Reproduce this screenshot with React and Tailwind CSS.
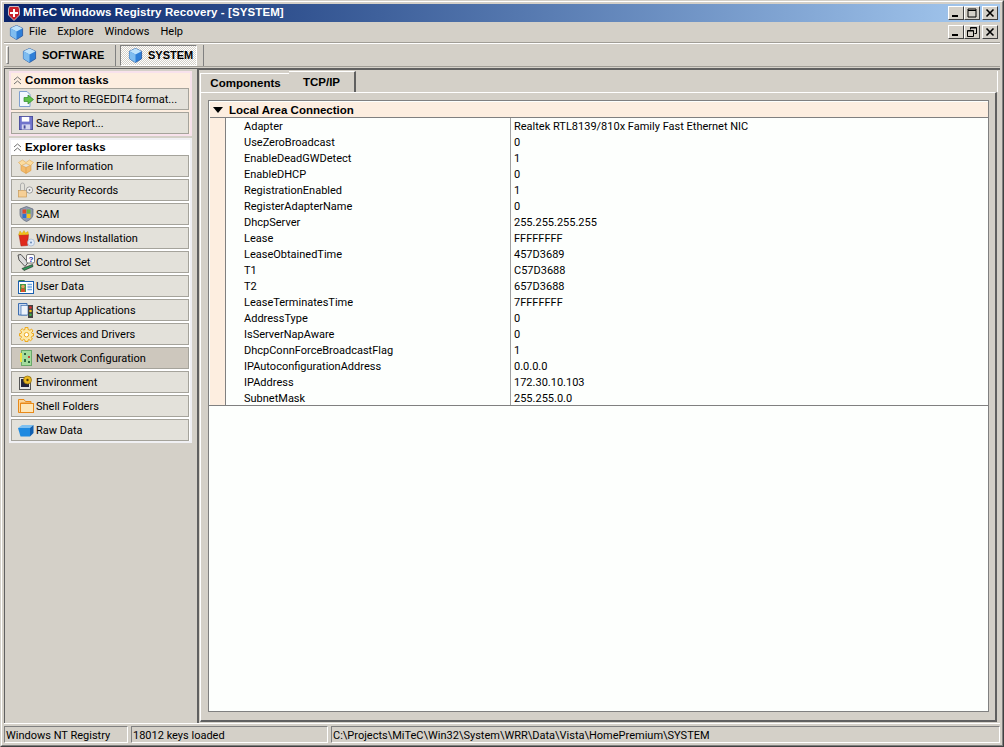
import React from "react";

const Cube = ({ s = 15 }) => (
  <svg width={s} height={s} viewBox="0 0 16 16" className="shrink-0">
    <path d="M8 0.5 L14.5 3.5 V11.5 L8 15.5 L1.5 11.5 V3.5 Z" fill="#2f7fd8" stroke="#1c4f9c" strokeWidth="0.8" />
    <path d="M8 0.5 L14.5 3.5 L8 7 L1.5 3.5 Z" fill="#bfe3fb" />
    <path d="M1.5 3.5 L8 7 V15.5 L1.5 11.5 Z" fill="#7fbdf0" />
  </svg>
);

const ExportIcon = () => (
  <svg width="16" height="16" viewBox="0 0 16 16">
    <path d="M1.5 0.5 H9 L12 3.5 V15.5 H1.5 Z" fill="#f4f8ff" stroke="#7f9fd0" />
    <path d="M6 6.5 H10 V4 L15.5 8.5 L10 13 V10.5 H6 Z" fill="#5fc24a" stroke="#2f8a2a" strokeWidth="0.7" />
  </svg>
);
const SaveIcon = () => (
  <svg width="14" height="14" viewBox="0 0 15 15">
    <rect x="0.5" y="0.5" width="14" height="14" fill="#7074cc" stroke="#4a4e9c" />
    <rect x="3" y="1" width="8" height="5" fill="#fff" />
    <rect x="3" y="9" width="9" height="5.5" fill="#d4d6ee" />
    <rect x="5" y="10" width="2" height="3.5" fill="#4a4e9c" />
  </svg>
);
const BoxIcon = () => (
  <svg width="16" height="15" viewBox="0 0 16 15">
    <path d="M3 6 L8 8.5 L13 6 V11.5 L8 14.5 L3 11.5 Z" fill="#f3bb6c" stroke="#dc9c44" strokeWidth="0.6" />
    <path d="M0.5 3.5 L4.5 1 L8 3.5 L11.5 1 L15.5 3.5 L12.5 6.5 L8 4.5 L3.5 6.5 Z" fill="#fbdca0" stroke="#e0a850" strokeWidth="0.6" />
    <path d="M8 8.5 V14.5" stroke="#dc9c44" strokeWidth="0.7" />
  </svg>
);
const KeysIcon = () => (
  <svg width="16" height="16" viewBox="0 0 16 16">
    <rect x="0.5" y="8.5" width="8" height="6.5" fill="#f6cf96" stroke="#c89a58" strokeWidth="0.7" />
    <path d="M2.5 8.5 V3 A2 2 0 0 1 6.5 3 V8.5" fill="none" stroke="#a8a8a8" strokeWidth="0.9" />
    <circle cx="11.5" cy="8" r="3.2" fill="#f0f0f0" stroke="#8c8c8c" strokeWidth="0.8" />
    <circle cx="11.5" cy="8" r="0.9" fill="#8c8c8c" />
  </svg>
);
const ShieldIcon = () => (
  <svg width="15" height="16" viewBox="0 0 15 16">
    <path d="M7.5 0.5 L14 3 V8 C14 12 10 14.5 7.5 15.5 C5 14.5 1 12 1 8 V3 Z" fill="#8f9ab0" stroke="#5b6476" strokeWidth="0.7" />
    <rect x="3.5" y="3.5" width="3.7" height="4" fill="#e0492a" />
    <rect x="7.8" y="3.5" width="3.7" height="4" fill="#6cb33f" />
    <rect x="3.5" y="8" width="3.7" height="4" fill="#2f6fd0" />
    <rect x="7.8" y="8" width="3.7" height="4" fill="#f5c218" />
  </svg>
);
const InstallIcon = () => (
  <svg width="17" height="17" viewBox="0 0 17 17">
    <path d="M1 5 L10.5 4.5 L9.5 15.5 L3 16 Z" fill="#e02a1c" stroke="#a81c12" strokeWidth="0.5" />
    <path d="M0.5 5 L2 1 L4 3.5 L6 0.5 L7.5 3 L10 1.5 L10.5 4.5 Z" fill="#f5c218" stroke="#c89a10" strokeWidth="0.4" />
    <circle cx="13" cy="12.5" r="3.5" fill="#dfe9f6" stroke="#93a9c8" strokeWidth="0.6" />
    <circle cx="13" cy="12.5" r="0.9" fill="#5f7fb0" />
  </svg>
);
const ControlIcon = () => (
  <svg width="18" height="17" viewBox="0 0 18 17">
    <path d="M1 1 L4 0.5 L11 8.5 L8 12.5 L2 6 Z" fill="#dcdcdc" stroke="#333" strokeWidth="0.8" />
    <rect x="9.5" y="0.5" width="8" height="8.5" rx="1.5" fill="#fff" stroke="#444" strokeWidth="0.7" />
    <text x="11.5" y="7.5" fontSize="8" fontWeight="700" fill="#1c2fb0" fontFamily="Liberation Sans, sans-serif">?</text>
    <path d="M5 14.5 L15.5 10.5 L16 12.5 L7 16.5 Z" fill="#2f9a5a" stroke="#1c1c1c" strokeWidth="0.6" />
  </svg>
);
const UserIcon = () => (
  <svg width="16" height="15" viewBox="0 0 16 15">
    <path d="M0.5 2.5 H6 L7 1 H0.5 Z" fill="#2f7a4a" />
    <rect x="0.5" y="2.5" width="15" height="12" fill="#fff" stroke="#1c5fae" />
    <rect x="2" y="5" width="6" height="8" fill="#3f9a4a" />
    <circle cx="5" cy="7.5" r="1.8" fill="#e8a060" />
    <rect x="3" y="9.5" width="4" height="3.5" fill="#d9502a" />
    <path d="M9.5 5.5 H14 M9.5 8 H14 M9.5 10.5 H14" stroke="#6fa8e0" strokeWidth="1.4" />
  </svg>
);
const StartupIcon = () => (
  <svg width="16" height="16" viewBox="0 0 16 16">
    <path d="M0.5 1.5 H9 V13 H0.5 Z" fill="#c8d8f0" stroke="#3f6fb0" />
    <rect x="3" y="3.5" width="7" height="9.5" fill="#eef3fb" stroke="#3f6fb0" strokeWidth="0.7" />
    <rect x="10" y="3" width="5" height="13" fill="#444" />
    <circle cx="12.5" cy="5.5" r="1.3" fill="#e0302a" />
    <circle cx="12.5" cy="9" r="1.3" fill="#f5c218" />
    <circle cx="12.5" cy="12.8" r="1.3" fill="#3fb04a" />
  </svg>
);
const GearIcon = () => (
  <svg width="15" height="15" viewBox="0 0 15 15">
    <path d="M6 0.5 H9 V2.5 L11 3.3 L12.5 2 L14 4 L12.5 5.3 L13 6.5 H14.5 V9 H13 L12.3 10.7 L13.5 12 L11.5 13.7 L10 12.5 L9 13 V14.5 H6 V13 L4.5 12.3 L3 13.7 L1.2 11.8 L2.5 10.3 L2 9 H0.5 V6.5 H2 L2.6 5 L1.3 3.5 L3.2 1.7 L4.7 3 L6 2.5 Z" fill="#fde9a8" stroke="#eda91e" />
    <circle cx="7.5" cy="7.7" r="2.2" fill="#fff" stroke="#eda91e" />
  </svg>
);
const NetIcon = () => (
  <svg width="12" height="16" viewBox="0 0 12 16">
    <rect x="1.5" y="0.5" width="10" height="15" fill="#a4dc9c" stroke="#6aa86a" />
    <rect x="0" y="3" width="2" height="9" fill="#f0e040" />
    <rect x="4" y="3" width="2" height="2" fill="#2f6a3f" />
    <rect x="8" y="6" width="2" height="2" fill="#c04a3a" />
    <rect x="4" y="9" width="2" height="3" fill="#2f6a3f" />
    <rect x="8" y="11" width="2" height="2" fill="#2f6a3f" />
  </svg>
);
const EnvIcon = () => (
  <svg width="15" height="15" viewBox="0 0 15 15">
    <rect x="0.5" y="2.5" width="11" height="12" fill="#e4e4e4" stroke="#555" />
    <rect x="2" y="4" width="8" height="8" fill="#23233a" />
    <circle cx="8.5" cy="5" r="4" fill="#eab820" stroke="#8a6a10" strokeWidth="0.7" />
    <circle cx="8.5" cy="5" r="1.2" fill="#5a4208" />
  </svg>
);
const FolderIcon = () => (
  <svg width="16" height="14" viewBox="0 0 16 14">
    <path d="M0.5 0.5 H6 L7.5 2.5 H13 V4 H2.5 V13.5 H0.5 Z" fill="#fcd69a" stroke="#e88a1a" />
    <rect x="2.5" y="4.5" width="13" height="9" fill="#fde6b8" stroke="#e88a1a" />
  </svg>
);
const RawIcon = () => (
  <svg width="16" height="13" viewBox="0 0 16 13">
    <path d="M0 4 L4 1 H15.5 L12 4 Z" fill="#7ec0f0" />
    <path d="M0 4 H12 V12.5 H2.5 Z" fill="#1f8ae0" />
    <path d="M12 4 L15.5 1 V9 L12 12.5 Z" fill="#0f5fb0" />
  </svg>
);
const ShieldLogo = () => (
  <svg width="12" height="15" viewBox="0 0 12 15" className="shrink-0">
    <path d="M1.5 0.5 H10.5 L11.5 3 V9 L6 14.5 L0.5 9 V3 Z" fill="#c8202a" stroke="#ddd" strokeWidth="0.8" />
    <path d="M5 3 H7 V6 H10 V8 H7 V11 H5 V8 H2 V6 H5 Z" fill="#fff" />
  </svg>
);

const Chevrons = () => (
  <svg width="9" height="9" viewBox="0 0 9 9" className="shrink-0">
    <path d="M1 4 L4.5 1 L8 4 M1 8 L4.5 5 L8 8" fill="none" stroke="#6f6f6f" strokeWidth="1" />
  </svg>
);

const WinBtn = ({ kind, gap }) => (
  <div className={`w-4 h-[14px] bg-[#d4d0c8] border border-t-white border-l-white border-r-[#404040] border-b-[#404040] flex items-center justify-center ${gap ? "ml-0.5" : ""}`}>
    <svg width="10" height="10" viewBox="0 0 10 10">
      {kind === "min" && <rect x="1" y="7" width="6" height="2" fill="#000" />}
      {kind === "max" && <path d="M1 2.5 H9 V9 H1 Z M1 1 H9 V2.5 H1 Z" fill="none" stroke="#000" />}
      {kind === "close" && <path d="M1.5 1.5 L8.5 8.5 M8.5 1.5 L1.5 8.5" stroke="#000" strokeWidth="1.6" />}
      {kind === "restore" && <path d="M3.5 2.5 V0.5 H9.5 V6.5 H7.5 M0.5 3.5 H6.5 V9.5 H0.5 Z M0.5 4 H6.5 M3.5 1 H9.5" fill="none" stroke="#000" />}
    </svg>
  </div>
);

const TaskButton = ({ icon, label, active }) => (
  <div className={`h-[22px] mr-px flex items-center border border-[#a5a39b] ${active ? "bg-[#cdc7bd]" : "bg-[#e3e1da]"}`}>
    <div className="w-6 h-4 shrink-0 flex items-center justify-center pl-1">{icon}</div>
    <span className="whitespace-nowrap pt-0.5">{label}</span>
  </div>
);

const rows = [
  ["Adapter", "Realtek RTL8139/810x Family Fast Ethernet NIC"],
  ["UseZeroBroadcast", "0"],
  ["EnableDeadGWDetect", "1"],
  ["EnableDHCP", "0"],
  ["RegistrationEnabled", "1"],
  ["RegisterAdapterName", "0"],
  ["DhcpServer", "255.255.255.255"],
  ["Lease", "FFFFFFFF"],
  ["LeaseObtainedTime", "457D3689"],
  ["T1", "C57D3688"],
  ["T2", "657D3688"],
  ["LeaseTerminatesTime", "7FFFFFFF"],
  ["AddressType", "0"],
  ["IsServerNapAware", "0"],
  ["DhcpConnForceBroadcastFlag", "1"],
  ["IPAutoconfigurationAddress", "0.0.0.0"],
  ["IPAddress", "172.30.10.103"],
  ["SubnetMask", "255.255.0.0"],
];

export default function App() {
  return (
    <div className="w-[1004px] h-[747px] overflow-hidden bg-[#d4d0c8] border border-t-[#d4d0c8] border-l-[#d4d0c8] border-r-[#404040] border-b-[#404040] font-['Roboto','Liberation_Sans',sans-serif] text-[11px] text-black">
      <div className="h-full border border-t-white border-l-white border-r-[#808080] border-b-[#808080] p-0.5 flex flex-col">
        {/* title bar */}
        <div className="h-[18px] shrink-0 flex items-center pl-1 pr-0.5 bg-gradient-to-r from-[#0a246a] to-[#a6caf0]">
          <ShieldLogo />
          <span className="ml-[3px] text-white font-bold font-['Liberation_Sans',sans-serif] text-[11.5px] tracking-[0.1px] flex-1">MiTeC Windows Registry Recovery - [SYSTEM]</span>
          <WinBtn kind="min" />
          <WinBtn kind="max" />
          <WinBtn kind="close" gap />
        </div>
        {/* menu */}
        <div className="h-[21px] shrink-0 flex items-center pl-[5px] pr-0.5 border-b border-b-[#a09d96]">
          <Cube s={15} />
          <div className="flex gap-[11px] ml-[5px]">
            <span>File</span>
            <span>Explore</span>
            <span>Windows</span>
            <span>Help</span>
          </div>
          <div className="flex-1" />
          <WinBtn kind="min" />
          <WinBtn kind="restore" />
          <WinBtn kind="close" gap />
        </div>
        {/* toolbar */}
        <div className="h-6 shrink-0 flex items-center border-t border-t-white border-b border-b-[#a09d96]">
          <div className="ml-[2px] w-[3px] h-[18px] border border-t-white border-l-white border-r-[#808080] border-b-[#808080]" />
          <div className="w-[106px] h-[22px] flex items-center pl-[13px]">
            <Cube s={15} />
            <span className="ml-[5px] font-bold font-['Liberation_Sans',sans-serif]">SOFTWARE</span>
          </div>
          <div className="w-px h-[21px] bg-[#808080]" />
          <div className="ml-1 w-[77px] h-[21px] flex items-center pl-[7px] border border-t-[#808080] border-l-[#808080] border-r-white border-b-white bg-[repeating-conic-gradient(#ffffff_0%_25%,#d4d0c8_0%_50%)] bg-[length:2px_2px]">
            <Cube s={15} />
            <span className="ml-[5px] mt-px font-bold font-['Liberation_Sans',sans-serif]">SYSTEM</span>
          </div>
          <div className="w-px h-[21px] bg-[#808080] ml-1.5" />
        </div>
        {/* main */}
        <div className="flex-1 min-h-0 flex mt-px">
          {/* task panels */}
          <div className="w-[193px] shrink-0 border-l border-t border-[#606060] pl-1 pr-[5px] pt-0.5">
            <div className="border-2 border-[#f8e2ec] bg-[#fdeee0]">
              <div className="h-[15px] flex items-center pl-0.5 gap-[3px]">
                <Chevrons />
                <span className="font-bold font-['Liberation_Sans',sans-serif] text-[11.5px] tracking-[0.1px]">Common tasks</span>
              </div>
              <div className="flex flex-col gap-0.5">
                <TaskButton icon={<ExportIcon />} label="Export to REGEDIT4 format..." />
                <TaskButton icon={<SaveIcon />} label="Save Report..." />
              </div>
            </div>
            <div className="mt-0.5 bg-white border-2 border-[#f0f0f4]">
              <div className="h-[15px] flex items-center pl-0.5 gap-[3px]">
                <Chevrons />
                <span className="font-bold font-['Liberation_Sans',sans-serif] text-[11.5px] tracking-[0.1px]">Explorer tasks</span>
              </div>
              <div className="flex flex-col gap-0.5">
                <TaskButton icon={<BoxIcon />} label="File Information" />
                <TaskButton icon={<KeysIcon />} label="Security Records" />
                <TaskButton icon={<ShieldIcon />} label="SAM" />
                <TaskButton icon={<InstallIcon />} label="Windows Installation" />
                <TaskButton icon={<ControlIcon />} label="Control Set" />
                <TaskButton icon={<UserIcon />} label="User Data" />
                <TaskButton icon={<StartupIcon />} label="Startup Applications" />
                <TaskButton icon={<GearIcon />} label="Services and Drivers" />
                <TaskButton icon={<NetIcon />} label="Network Configuration" active />
                <TaskButton icon={<EnvIcon />} label="Environment" />
                <TaskButton icon={<FolderIcon />} label="Shell Folders" />
                <TaskButton icon={<RawIcon />} label="Raw Data" />
              </div>
            </div>
          </div>
          {/* tab area */}
          <div className="flex-1 min-w-0 flex flex-col border-l-2 border-t-2 border-[#606060] pl-px pt-px pb-px">
            <div className="h-[21px] shrink-0 flex items-end mr-0.5 border-r border-r-white">
              <div className="w-[89px] h-[19px] pt-0.5 pl-px flex items-center justify-center font-bold font-['Liberation_Sans',sans-serif] text-[11.5px] border-t border-l border-t-white border-l-white">Components</div>
              <div className="w-[67px] h-[21px] flex items-start pt-[2px] justify-center font-bold font-['Liberation_Sans',sans-serif] text-[11.5px] border-t border-t-white border-r-2 border-r-[#606060]">TCP/IP</div>
            </div>
            <div className="flex-1 min-h-0 border-t border-l border-t-white border-l-white border-r-2 border-b-2 border-r-[#606060] border-b-[#606060] mr-[3px] pt-[7px] pl-[7px] pr-1.5 pb-2 flex">
              <div className="flex-1 min-w-0 bg-[#fdfffd] border border-[#808080]">
                <div className="h-4 mt-px ml-px bg-[#fdeee0] flex items-center pl-[3px] border-b border-b-[#808080]">
                  <svg width="10" height="6" viewBox="0 0 10 6"><path d="M0 0 H10 L5 6 Z" fill="#000" /></svg>
                  <span className="ml-1.5 pt-0.5 font-bold font-['Liberation_Sans',sans-serif] text-[11.5px]">Local Area Connection</span>
                </div>
                <div className="h-[288px] overflow-hidden border-b border-b-[#808080]">
                  {rows.map((r) => (
                    <div key={r[0]} className="h-4 flex ml-px">
                      <div className="w-4 bg-[#fdeee0] border-r border-r-[#808080] shrink-0" />
                      <div className="w-[285px] h-4 shrink-0 pl-[18px] leading-[18px] border-r border-r-[#a0a0a0] whitespace-nowrap">{r[0]}</div>
                      <div className="pl-[3px] h-4 leading-[18px] whitespace-nowrap">{r[1]}</div>
                    </div>
                  ))}
                </div>
              </div>
            </div>
          </div>
        </div>
        {/* status bar */}
        <div className="h-5 shrink-0 flex gap-[3px] border-t border-t-white pt-0.5">
          <div className="w-[124px] border border-t-[#808080] border-l-[#808080] border-r-white border-b-white pl-px leading-[17px] whitespace-nowrap">Windows NT Registry</div>
          <div className="w-[197px] border border-t-[#808080] border-l-[#808080] border-r-white border-b-white pl-px leading-[17px] whitespace-nowrap">18012 keys loaded</div>
          <div className="flex-1 border border-t-[#808080] border-l-[#808080] border-r-white border-b-white pl-px leading-[17px] whitespace-nowrap">C:\Projects\MiTeC\Win32\System\WRR\Data\Vista\HomePremium\SYSTEM</div>
        </div>
      </div>
    </div>
  );
}
